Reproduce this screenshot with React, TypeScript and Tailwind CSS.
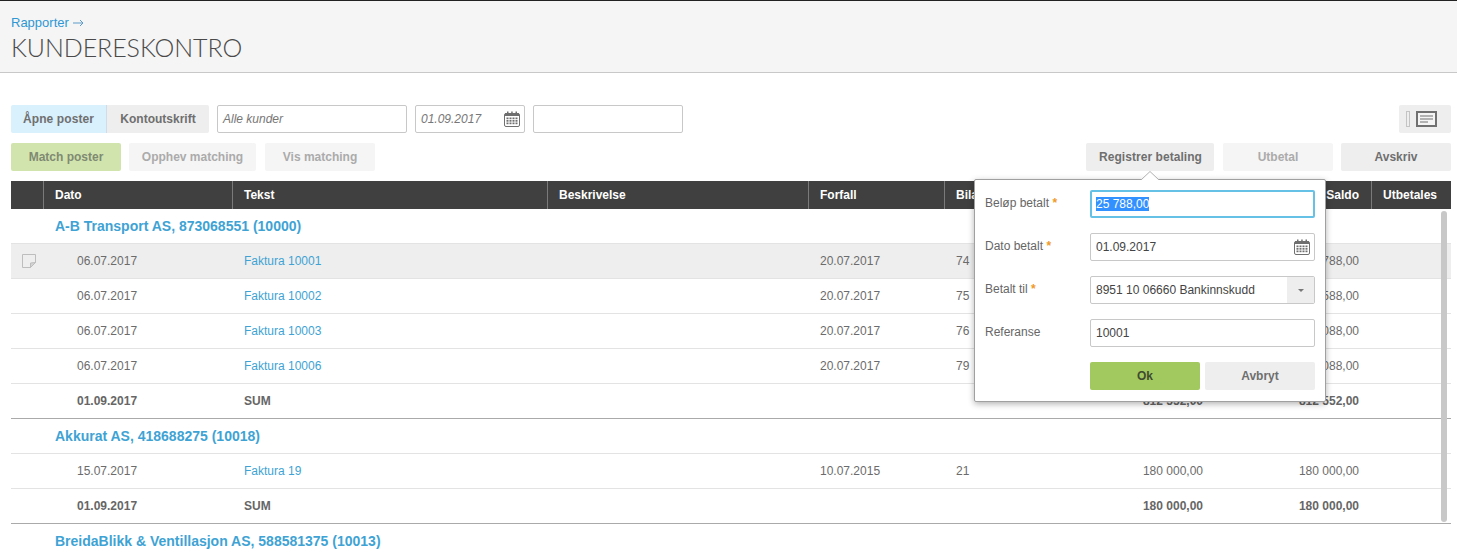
import React from "react";

const GRID = "grid grid-cols-[33px_189px_315px_261px_136px_115px_156px_156px_79px]";

function CalendarIcon({ className = "" }: { className?: string }) {
  return (
    <svg width="16" height="16" viewBox="0 0 16 16" className={className}>
      <rect x="0.5" y="2.5" width="15" height="13" rx="1.5" fill="#fff" stroke="#6f6f6f" />
      <rect x="1" y="2" width="14" height="3" fill="#6f6f6f" />
      <rect x="3" y="0.5" width="1.5" height="3" fill="#6f6f6f" />
      <rect x="7.2" y="0.5" width="1.5" height="3" fill="#6f6f6f" />
      <rect x="11.5" y="0.5" width="1.5" height="3" fill="#6f6f6f" />
      {[6.5, 9, 11.5].map((y) =>
        [2.5, 5.5, 8.5, 11.5].map((x) => (
          <rect key={`${x}-${y}`} x={x} y={y} width="2" height="1.7" fill="#6f6f6f" />
        ))
      )}
    </svg>
  );
}

function NoteIcon() {
  return (
    <svg width="14" height="14" viewBox="0 0 14 14">
      <path d="M0.5 0.5H13.5V8.5L8.5 13.5H0.5Z" fill="none" stroke="#bdbdbd" />
      <path d="M13.5 8.5L8.5 9V13.5Z" fill="#d4d4d4" stroke="#bdbdbd" />
    </svg>
  );
}

function Btn({ children, className }: { children: React.ReactNode; className: string }) {
  return (
    <div className={`h-7 flex items-center justify-center rounded-[2px] text-[12px] font-bold ${className}`}>
      {children}
    </div>
  );
}

function Head({ children, right, className = "" }: { children?: React.ReactNode; right?: boolean; className?: string }) {
  return (
    <div className={`h-7 flex items-center border-r border-[#7a7a7a] ${right ? "justify-end pr-[12px]" : "pl-[11px]"} ${className}`}>
      {children}
    </div>
  );
}

type R = { date: string; text: string; due?: string; bilag?: string; a: string; b: string; sum?: boolean; end?: boolean; hover?: boolean };

function Row({ r }: { r: R }) {
  return (
    <div
      className={`${GRID} h-[35px] items-center border-b text-[12px] ${r.end ? "border-[#aaaaaa]" : "border-[#e3e3e3]"} ${r.hover ? "bg-[#eeeeee]" : ""} ${r.sum ? "font-bold text-[#666666]" : "text-[#6b6b6b]"}`}
    >
      <div className="pl-[11px] flex items-center">{r.hover && <NoteIcon />}</div>
      <div className="pl-[33px]">{r.date}</div>
      <div className={`pl-[11px] ${r.sum ? "" : "text-[#3ea3d4]"}`}>{r.text}</div>
      <div />
      <div className="pl-[11px]">{r.due}</div>
      <div className="pl-[11px]">{r.bilag}</div>
      <div className="text-right pr-[13px]">{r.a}</div>
      <div className="text-right pr-[13px]">{r.b}</div>
      <div />
    </div>
  );
}

function Group({ name }: { name: string }) {
  return (
    <div className="h-[35px] flex items-center pl-[44px] border-b border-[#e3e3e3] text-[14px] font-bold text-[#3ea3d4]">
      {name}
    </div>
  );
}

function Field({ label, req, children }: { label: string; req?: boolean; children: React.ReactNode }) {
  return (
    <div className="grid grid-cols-[105px_225px] items-start">
      <div className="text-[12px] leading-[14px] text-[#666666] pt-[6px]">
        {label}
        {req && <span className="text-[#f09a28] font-bold"> *</span>}
      </div>
      {children}
    </div>
  );
}

const boxed = "h-7 border border-[#c8c8c8] rounded-[2px] bg-white flex items-center text-[12px]";

export default function App() {
  return (
    <div className="relative h-[557px] overflow-hidden bg-white font-['Liberation_Sans',Arial,sans-serif]">
      <header className="h-[73px] bg-[#f5f5f5] border-t border-[#222222] pl-[11px] pt-[14px] shadow-[inset_0_-1px_0_#c8c8c8]">
        <div className="flex items-center gap-[4px] text-[13px] leading-[15px] text-[#2f97d3]">
          <span>Rapporter</span>
          <svg width="11" height="8" viewBox="0 0 11 8">
            <path d="M0 4H10M7 1L10 4L7 7" fill="none" stroke="#5b9bcb" strokeWidth="1" />
          </svg>
        </div>
        <div className="mt-[3px] font-['Lato',sans-serif] font-light text-[25px] leading-[28px] tracking-[-0.07px] text-[#4a4a4a]">
          KUNDERESKONTRO
        </div>
      </header>

      <div className="pl-[11px] pr-[6px] pt-[32px]">
        <div className="flex items-start">
          <div className="w-[96px] h-7 flex items-center justify-center bg-[#d9f0fd] text-[12px] font-bold text-[#6f6f6f] rounded-l-[2px] border-r border-[#cfdde6] tracking-[0.1px]">
            Åpne poster
          </div>
          <div className="w-[102px] h-7 flex items-center justify-center bg-[#eeeeee] text-[12px] font-bold text-[#6f6f6f] rounded-r-[2px]">
            Kontoutskrift
          </div>
          <div className={`${boxed} ml-[8px] w-[190px] pl-[5px] italic text-[#777777]`}>Alle kunder</div>
          <div className={`${boxed} ml-[8px] w-[110px] pl-[5px] pr-[4px] italic text-[#777777] justify-between`}>
            <span>01.09.2017</span>
            <CalendarIcon />
          </div>
          <div className={`${boxed} ml-[8px] w-[150px]`} />
          <div className="ml-auto w-[52px] h-7 bg-[#eeeeee] rounded-[2px] flex items-center pl-[7px] gap-[6px]">
            <div className="w-[4px] h-[16px] border border-[#c4c4c4]" />
            <svg width="21" height="16" viewBox="0 0 21 16">
              <rect x="1" y="1" width="19" height="14" fill="#f4f4f4" stroke="#707070" strokeWidth="2" />
              <path d="M4 5H17M4 8H17M4 11H12" stroke="#707070" strokeWidth="1" />
            </svg>
          </div>
        </div>

        <div className="flex mt-[10px]">
          <Btn className="w-[110px] bg-[#d2e4ae] text-[#7f8a72]">Match poster</Btn>
          <Btn className="ml-[8px] w-[127px] bg-[#f5f5f5] text-[#ababab]">Opphev matching</Btn>
          <Btn className="ml-[9px] w-[110px] bg-[#f5f5f5] text-[#ababab]">Vis matching</Btn>
          <Btn className="ml-auto w-[128px] bg-[#eeeeee] text-[#6f6f6f] tracking-[0.05px] pl-[1px]">Registrer betaling</Btn>
          <Btn className="ml-[9px] w-[110px] bg-[#f5f5f5] text-[#ababab]">Utbetal</Btn>
          <Btn className="ml-[8px] w-[110px] bg-[#eeeeee] text-[#6f6f6f]">Avskriv</Btn>
        </div>

        <div className={`${GRID} mt-[10px] bg-[#404040] text-white text-[12px] font-bold`}>
          <Head />
          <Head>Dato</Head>
          <Head>Tekst</Head>
          <Head>Beskrivelse</Head>
          <Head>Forfall</Head>
          <Head>Bilag</Head>
          <Head right>Beløp</Head>
          <Head right>Saldo</Head>
          <Head className="border-r-0">Utbetales</Head>
        </div>

        <Group name="A-B Transport AS, 873068551 (10000)" />
        <Row r={{ hover: true, date: "06.07.2017", text: "Faktura 10001", due: "20.07.2017", bilag: "74", a: "25 788,00", b: "25 788,00" }} />
        <Row r={{ date: "06.07.2017", text: "Faktura 10002", due: "20.07.2017", bilag: "75", a: "186 588,00", b: "186 588,00" }} />
        <Row r={{ date: "06.07.2017", text: "Faktura 10003", due: "20.07.2017", bilag: "76", a: "300 088,00", b: "300 088,00" }} />
        <Row r={{ date: "06.07.2017", text: "Faktura 10006", due: "20.07.2017", bilag: "79", a: "300 088,00", b: "300 088,00" }} />
        <Row r={{ sum: true, end: true, date: "01.09.2017", text: "SUM", a: "812 552,00", b: "812 552,00" }} />
        <Group name="Akkurat AS, 418688275 (10018)" />
        <Row r={{ date: "15.07.2017", text: "Faktura 19", due: "10.07.2015", bilag: "21", a: "180 000,00", b: "180 000,00" }} />
        <Row r={{ sum: true, end: true, date: "01.09.2017", text: "SUM", a: "180 000,00", b: "180 000,00" }} />
        <Group name="BreidaBlikk & Ventillasjon AS, 588581375 (10013)" />
      </div>

      {/* scrollbar thumb over the table */}
      <div className="absolute left-[1441px] top-[211px] w-[6px] h-[311px] rounded-[3px] bg-[#c8c8c8]" />

      {/* popover */}
      <div className="absolute left-[974px] top-[179px] w-[352px] h-[223px] box-border bg-white border border-[#a0a0a0] rounded-[2px] shadow-[0_2px_6px_rgba(0,0,0,0.3)] pl-[10px] pt-[10px]">
        <svg width="18" height="9" viewBox="0 0 18 9" className="absolute left-[166px] top-[-9px]">
          <path d="M0 9L9 0.5L18 9" fill="#fff" stroke="#b0b0b0" />
        </svg>
        <div className="flex flex-col gap-[15px]">
          <Field label="Beløp betalt" req>
            <div className="h-7 border-2 border-[#66c1e6] rounded-[2px] bg-white flex items-center pl-[4px] text-[12px]">
              <span className="bg-[#3390ff] text-white leading-[14px]">25 788,00</span>
            </div>
          </Field>
          <Field label="Dato betalt" req>
            <div className={`${boxed} pl-[5px] pr-[4px] justify-between text-[#444444]`}>
              <span>01.09.2017</span>
              <CalendarIcon />
            </div>
          </Field>
          <Field label="Betalt til" req>
            <div className={`${boxed} pl-[5px] justify-between text-[#444444] overflow-hidden`}>
              <span>8951 10 06660 Bankinnskudd</span>
              <div className="w-[27px] h-full bg-[#eeeeee] flex items-center justify-center">
                <div className="w-0 h-0 border-x-[3px] border-x-transparent border-t-[3px] border-t-[#777777]" />
              </div>
            </div>
          </Field>
          <Field label="Referanse">
            <div className={`${boxed} pl-[5px] text-[#444444]`}>10001</div>
          </Field>
          <div className="flex pl-[105px]">
            <Btn className="w-[110px] bg-[#a2c95f] text-[#3f4a2e]">Ok</Btn>
            <Btn className="ml-[5px] w-[110px] bg-[#eeeeee] text-[#6f6f6f]">Avbryt</Btn>
          </div>
        </div>
      </div>
    </div>
  );
}
